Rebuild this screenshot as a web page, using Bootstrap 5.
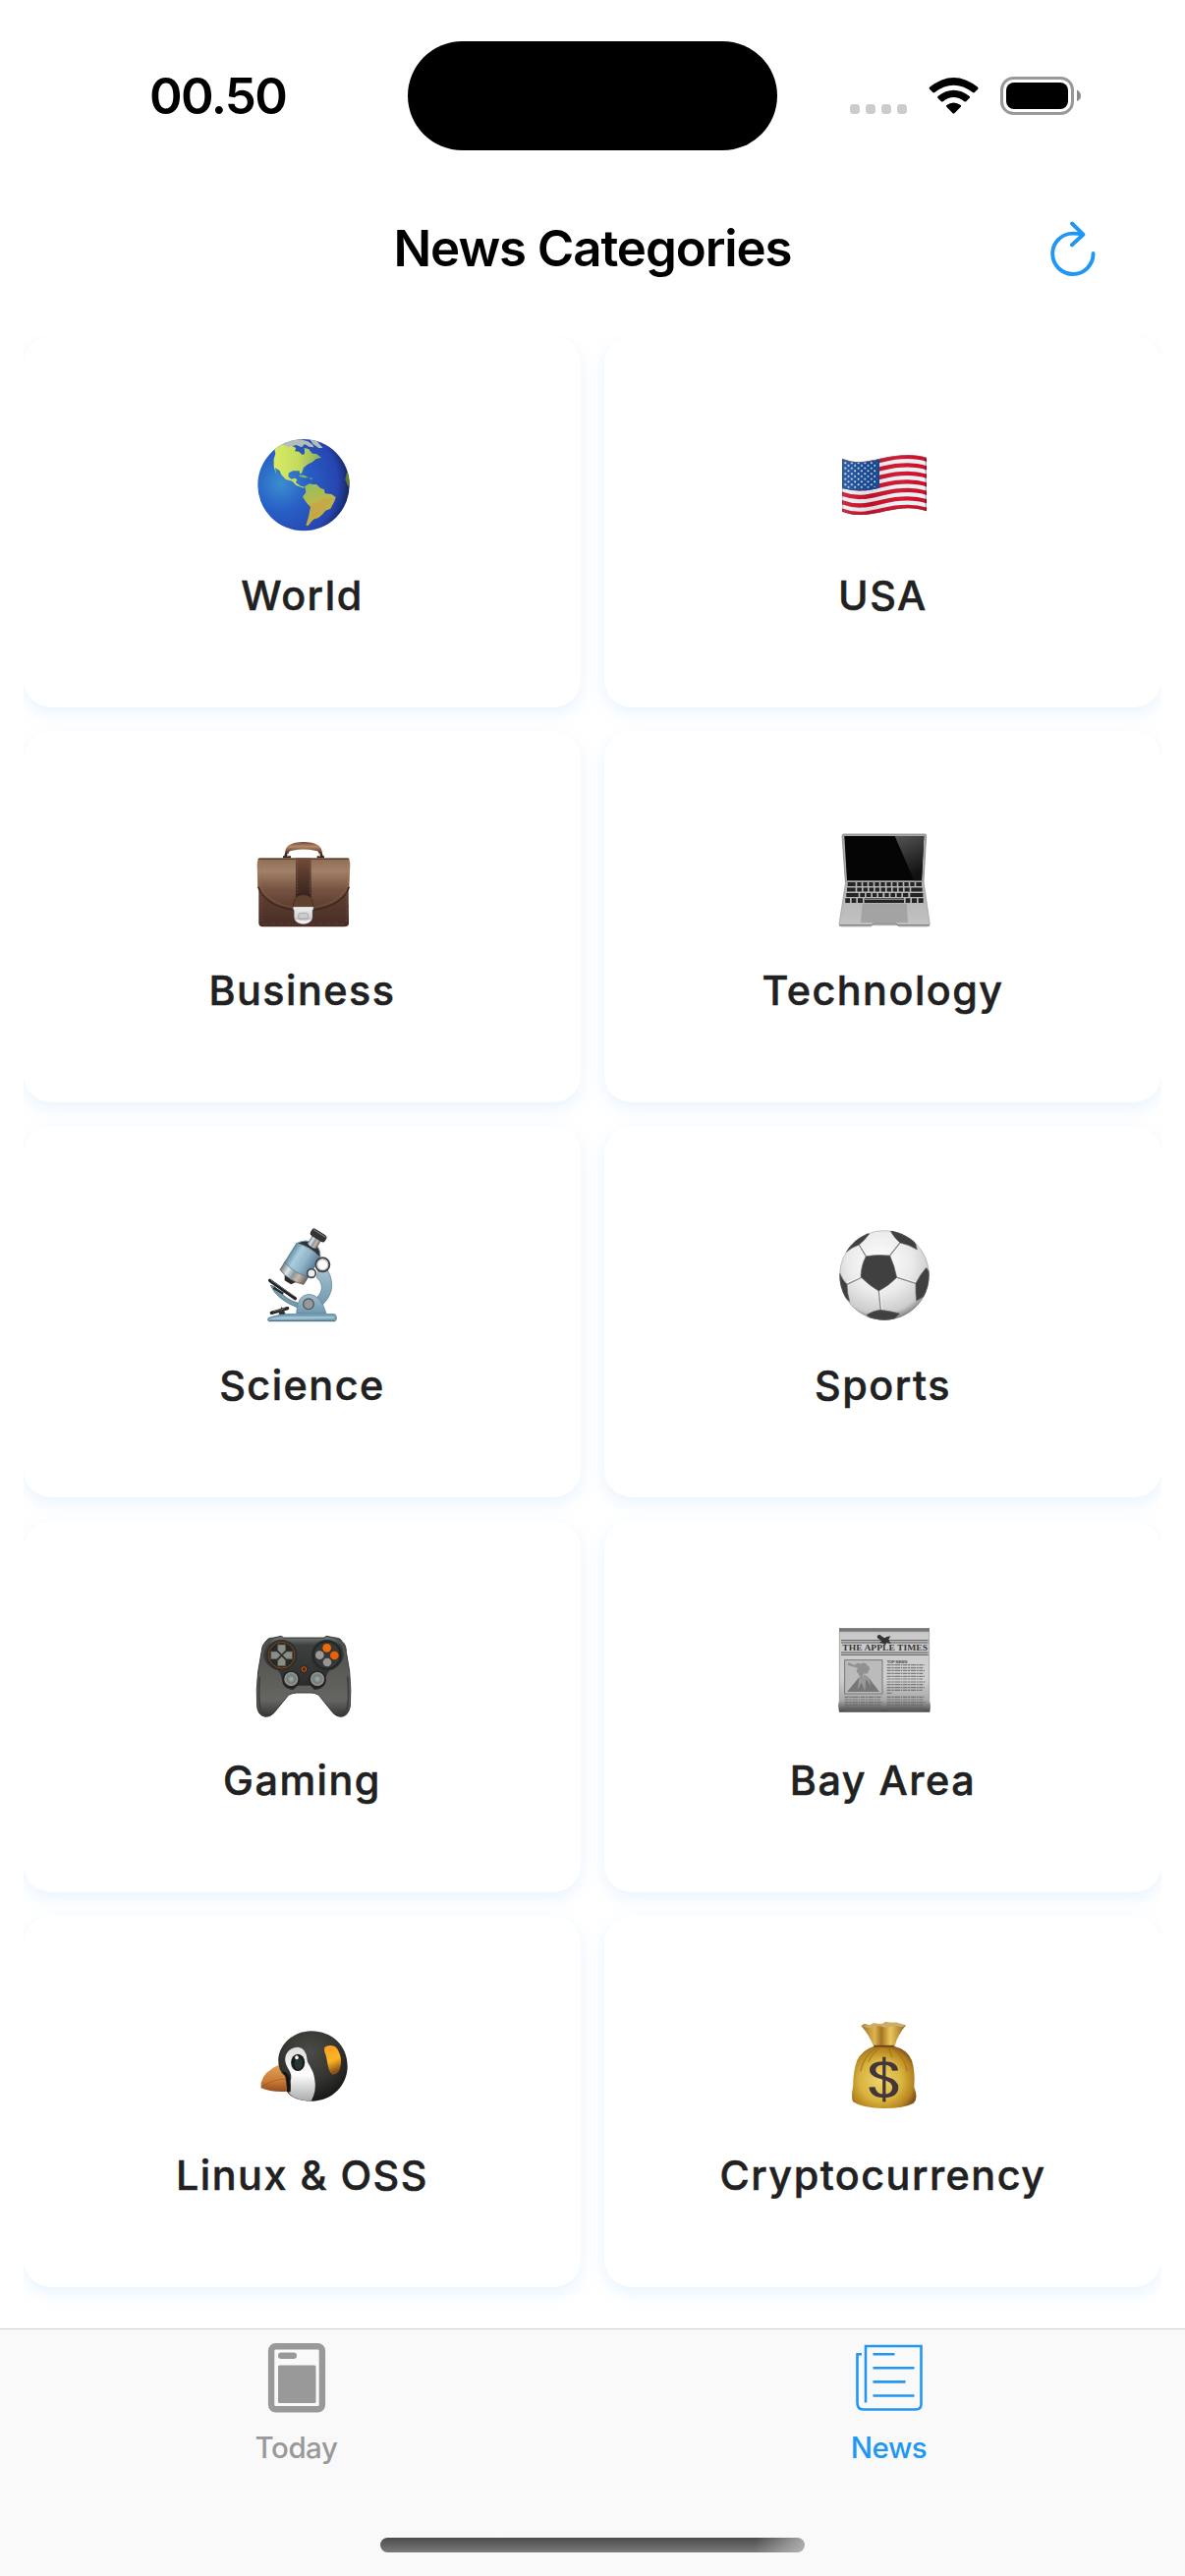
<!DOCTYPE html>
<html lang="en">
<head>
<meta charset="utf-8">
<meta name="viewport" content="width=device-width, initial-scale=1">
<title>News Categories</title>
<link href="https://cdn.jsdelivr.net/npm/bootstrap@5.3.0/dist/css/bootstrap.min.css" rel="stylesheet">
<style>
  body { font-family: Inter, "Liberation Sans", sans-serif; background: #fff; color: #000; }
  .phone { width: 1206px; height: 2622px; }
  svg { display: block; flex: none; }
  .status-bar { height: 177px; padding: 41px 101px 0 152px; }
  .clock { width: 263px; font-size: 51px; font-weight: 600; line-height: 114px; letter-spacing: -1.6px; }
  .island { width: 376px; height: 111px; margin-top: 1px; border-radius: 56px; background: #000; }
  .app-bar { height: 165px; padding: 0 90px; }
  .app-bar .side { width: 48px; }
  .app-title { font-size: 51px; font-weight: 600; letter-spacing: -1.1px; line-height: 62px; margin-top: -14px; }
  .category-grid { height: 2028px; margin: 0 24px; overflow: hidden; display: grid; grid-template-columns: 1fr 1fr; grid-auto-rows: 378px; gap: 24px; }
  .category { border: 0; border-radius: 28px; box-shadow: 0 6px 17px rgba(33,150,243,.1); padding-top: 92px; }
  .category svg { width: 120px; height: 120px; margin-left: 3px; }
  .category-name { margin-top: 28px; font-size: 41.3px; line-height: 48px; font-weight: 500; letter-spacing: 1.5px; color: #212121; white-space: nowrap; -webkit-text-stroke: .5px #212121; }
  .tab-bar { height: 252px; background: #f9f9f9; border-top: 1px solid #cdcdcd; }
  .tab { color: #999; text-decoration: none; padding-top: 9px; font-size: 29.5px; line-height: 36px; font-weight: 500; letter-spacing: -.5px; }
  .tab.active { color: #2196f3; }
  .tab svg { margin-bottom: 9px; }
  .tabs { height: 212px; }
  .home-line { width: 432px; height: 15px; border-radius: 8px; margin: 0 auto; background: linear-gradient(100deg, rgba(249,249,249,0) 88%, rgba(200,200,200,.75) 100%), linear-gradient(#4c4c4c, #7a7a7a); }
</style>
</head>
<body>
<div class="phone d-flex flex-column overflow-hidden">
  <header class="status-bar d-flex align-items-start">
    <div class="clock">00.50</div>
    <div class="island"></div>
    <svg class="ms-auto" width="240" height="112" viewBox="865 41 240 112">
      <g fill="#ccc"><rect x="865" y="106" width="10" height="10" rx="3.5"/><rect x="881" y="106" width="10" height="10" rx="3.5"/><rect x="897" y="106" width="10" height="10" rx="3.5"/><rect x="913" y="106" width="10" height="10" rx="3.5"/></g>
      <path d="M946 88.8Q970.5 69 995.200 88.800Q996 89.800 995.200 90.700L991.800 94Q990.900 94.800 989.900 94Q970.500 79.500 951.300 94Q950.300 94.800 949.400 94L946 90.700Q945.200 89.800 946 88.800ZM954.500 98Q970.500 85.500 986.700 98Q987.600 98.800 986.800 99.700L983.200 103.200Q982.300 104 981.300 103.200Q970.500 95 959.800 103.200Q958.800 104 957.900 103.200L954.400 99.700Q953.600 98.800 954.500 98ZM963.400 107.100Q970.500 101.700 977.800 107.100Q978.600 107.900 977.800 108.800L971.400 115.300Q970.500 116.100 969.600 115.300L963.300 108.800Q962.500 107.900 963.400 107.100Z"/>
      <rect x="1019.500" y="79.500" width="72" height="36" rx="12" fill="none" stroke="#999" stroke-width="3"/>
      <rect x="1024" y="84" width="63" height="27" rx="8"/>
      <path d="M1096 91.500Q1100 93.500 1100 97.500T1096 103Z" fill="#8b8b8b"/>
    </svg>
  </header>

  <div class="app-bar d-flex align-items-center justify-content-between">
    <span class="side"></span>
    <h1 class="app-title mb-0">News Categories</h1>
    <svg width="48" height="72" viewBox="1068 224 48 72" fill="none" stroke="#2196f3" stroke-width="3.900" stroke-linecap="round" stroke-linejoin="round">
      <path d="M1102.200 238.600Q1097 237.600 1092 237.600A20.700 20.700 0 1 0 1112.600 258M1091 227.500L1102.400 238.700L1091 249.300"/>
    </svg>
  </div>

  <main class="category-grid">
    <section class="card category align-items-center">
      <svg viewBox="57 42 360 360">
        <defs>
          <radialGradient id="sea" cx=".25" cy=".48" r=".78"><stop offset="0" stop-color="#3b8ed0"/><stop offset=".38" stop-color="#2860c6"/><stop offset=".8" stop-color="#2745b0"/><stop offset="1" stop-color="#121f50"/></radialGradient>
          <linearGradient id="north" x1="0" x2="1"><stop offset="0" stop-color="#d8ea62"/><stop offset=".5" stop-color="#c5dc5f"/><stop offset="1" stop-color="#8dad5a"/></linearGradient>
          <linearGradient id="south" x1="0" x2=".3" y2="1"><stop offset="0" stop-color="#91c060"/><stop offset=".5" stop-color="#b9b94e"/><stop offset="1" stop-color="#c7a743"/></linearGradient>
          <clipPath id="globe"><circle cx="237" cy="221" r="140"/></clipPath>
        </defs>
        <circle cx="237" cy="221" r="140" fill="url(#sea)"/>
        <g clip-path="url(#globe)">
          <path d="M148 112L170 96L198 100L214 108L210 118L223 119L232 128L240 127L239 108L252 111L264 125L276 126L291 137L274 142L265 150L249 158L237 168L232 184L225 187L224 178L204 178L192 184L190 195L199 203L210 200L217 204L213 214L228 224L241 227L236 230L214 222L202 209L183 204L169 190L164 177L150 169L154 188L146 166L146 142L151 125Z" fill="url(#north)"/>
          <path d="M170 95L195 85L228 82L250 88L265 98L268 106L254 104L240 96L231 106L215 99L190 105ZM256 82L278 88L296 108L283 108L266 96Z" fill="#b5bdb9"/>
          <path d="M213 110L235 104L241 119L229 123Z" fill="#2b55ad"/>
          <path d="M224 190L241 192L252 199L239 199L224 195ZM253 199L265 201L260 204Z" fill="#8bb461"/>
          <path d="M241 225L254 217L265 219L276 219L289 231L300 235L302 247L322 249L335 258L331 271L319 293L304 299L294 311L282 321L267 326L259 335L250 346L244 344L252 318L258 288L247 277L234 257L244 243Z" fill="url(#south)"/>
          <path d="M257 278L281 272L304 260L325 264L307 289L282 311L261 322Z" fill="#cda045" opacity=".6"/>
          <path d="M371 178L377 193L377 230L370 220L364 204L367 190Z" fill="#657b2b"/>
        </g>
      </svg>
      <div class="category-name">World</div>
    </section>

    <section class="card category align-items-center">
      <svg viewBox="60 42 360 360">
        <defs>
          <clipPath id="flag"><path d="M111 140C155 158 190 149 232 139S330 123 369 137V301C330 286 285 291 243 301S158 320 111 302Z"/></clipPath>
          <linearGradient id="sheen"><stop offset="0" stop-color="#222" stop-opacity=".35"/><stop offset=".03" stop-color="#fff" stop-opacity=".1"/><stop offset=".35" stop-color="#000" stop-opacity=".08"/><stop offset=".7" stop-color="#fff" stop-opacity=".05"/><stop offset=".97" stop-color="#000" stop-opacity="0"/><stop offset="1" stop-color="#000" stop-opacity=".4"/></linearGradient>
          <path id="wave" d="M105 144C155 164 190 155 232 145S330 129 375 145"/>
          <pattern id="stars" width="20" height="16.500" patternUnits="userSpaceOnUse" x="116" y="150"><rect x="2" y="1" width="5.500" height="5.500" rx="2" fill="#fff"/><rect x="12" y="9" width="5.500" height="5.500" rx="2" fill="#fff"/></pattern>
        </defs>
        <g clip-path="url(#flag)">
          <rect x="105" y="125" width="270" height="200" fill="#edf3f5"/>
          <g fill="none" stroke="#d0102b" stroke-width="13"><use href="#wave"/><use href="#wave" y="25.500"/><use href="#wave" y="51"/><use href="#wave" y="76.500"/><use href="#wave" y="102"/><use href="#wave" y="127.500"/><use href="#wave" y="153"/></g>
          <path d="M111 140C150 157 187 151 225 141V230Q169 245 111 232Z" fill="#124a98"/>
          <path d="M116 148Q160 158 218 147V226Q168 238 116 229Z" fill="url(#stars)"/>
          <rect x="110" y="125" width="260" height="200" fill="url(#sheen)"/>
          <path d="M111 140C155 158 190 149 232 139S330 123 369 137" fill="none" stroke="#8b8187" stroke-width="5" opacity=".65"/>
          <path d="M111 302C158 320 200 311 243 301S330 286 369 301" fill="none" stroke="#76172a" stroke-width="5" opacity=".6"/>
        </g>
      </svg>
      <div class="category-name">USA</div>
    </section>

    <section class="card category align-items-center">
      <svg viewBox="147 48 360 360">
        <defs>
          <linearGradient id="flap" x2="0" y2="1"><stop offset="0" stop-color="#8e6c54"/><stop offset=".25" stop-color="#a18168"/><stop offset=".6" stop-color="#765240"/><stop offset="1" stop-color="#593a2e"/></linearGradient>
          <linearGradient id="bag" x2="0" y2="1"><stop offset="0" stop-color="#735242"/><stop offset="1" stop-color="#482c24"/></linearGradient>
          <linearGradient id="grip" x2="0" y2="1"><stop offset="0" stop-color="#6d4632"/><stop offset=".4" stop-color="#b8896a"/><stop offset="1" stop-color="#4a2d20"/></linearGradient>
          <linearGradient id="strap" x2="0" y2="1"><stop offset="0" stop-color="#704b38"/><stop offset="1" stop-color="#35221b"/></linearGradient>
          <linearGradient id="steel" x2="0" y2="1"><stop offset="0" stop-color="#eee"/><stop offset=".6" stop-color="#d4d4d6"/><stop offset="1" stop-color="#fff"/></linearGradient>
        </defs>
        <path d="M273 160V151L279 135M381 160V151L375 135" stroke="#3c2a23" stroke-width="9" fill="none"/>
        <path d="M264 157H288M368 157H390" stroke="#2e211d" stroke-width="7"/><path d="M278 145v10M376 145v10" stroke="#d7ad87" stroke-width="4"/>
        <path d="M271 146Q270 129 282 121Q300 111 327 111T371 121Q383 128 383 146L374 145Q373 138 361 137Q327 130 292 137Q281 138 280 146Z" fill="url(#grip)"/>
        <path d="M190 175H463L465 360Q464 370 451 370H202Q190 370 190 358Z" fill="url(#bag)"/>
        <path d="M192 160H462Q468 164 469 180L466 248C450 296 399 320 327 321S202 296 187 248L185 180Q186 164 192 160Z" fill="url(#flap)"/>
        <path d="M188 248C204 294 260 320 327 320S451 295 466 248" fill="none" stroke="#402820" stroke-width="5"/>
        <path d="M194 165V241C212 289 262 312 327 312S443 288 460 241V165" fill="none" stroke="#a98268" stroke-width="1.500" stroke-dasharray="4 4"/>
        <path d="M188 163H466" stroke="#5d4030" stroke-width="4"/>
        <path d="M303 160H350V280H303Z" fill="url(#strap)"/><path d="M307 164V272M346 164V272" stroke="#9b7157" stroke-width="1.500" stroke-dasharray="5 4"/>
        <path d="M296 311V300Q298 272 326 272T356 300V311Z" fill="#60402f" stroke="#3e271e" stroke-width="2"/>
        <path d="M295 309H357V316L354 320V343Q350 361 326 362Q302 361 298 343V320L295 316Z" fill="url(#steel)" stroke="#777" stroke-width="1"/>
        <rect x="311" y="328" width="30" height="20" rx="6" fill="#ccc" stroke="#999" stroke-width="2"/><path d="M300 345H353" stroke="#999" stroke-width="2"/>
        <path d="M199 188V356M457 188V356M204 361H448" fill="none" stroke="#8e6856" stroke-width="1.300" stroke-dasharray="4 4"/>
      </svg>
      <div class="category-name">Business</div>
    </section>

    <section class="card category align-items-center">
      <svg viewBox="240 48 360 360">
        <defs>
          <linearGradient id="glare" x2=".3" y2="1"><stop offset="0" stop-color="#555"/><stop offset="1" stop-color="#111"/></linearGradient>
          <linearGradient id="alu" x2="0" y2="1"><stop offset="0" stop-color="#b0b0b0"/><stop offset="1" stop-color="#c3c3c3"/></linearGradient>
        </defs>
        <path d="M295 87H545Q549 88 548 93L540 232H301L291 93Q291 88 295 87Z" fill="#aaa" stroke="#777" stroke-width="2"/>
        <path d="M298 93H541L534 229H306Z" fill="#050505"/>
        <path d="M452 93H541L534 229H511Z" fill="url(#glare)"/>
        <path d="M302 231H540L559 362Q559 368 552 369H466L458 365H384L379 369H289Q282 369 282 362Z" fill="url(#alu)" stroke="#838383" stroke-width="1.500"/>
        <path d="M283 365H380L387 360H455L462 365H558" fill="none" stroke="#777" stroke-width="3"/>
        <path d="M354 300H487L491 356H349Z" fill="#a3a3a3" stroke="#939393"/>
        <g fill="none" stroke="#242424" stroke-width="11.500">
          <path d="M308 240H332M337 240H350M355 240H368M373 240H386M391 240H404M409 240H422M427 240H440M445 240H458M463 240H476M481 240H494M499 240H512M517 240H534"/>
          <path d="M306 256.500H332M337 256.500H351M356 256.500H369M374 256.500H387M392 256.500H405M410 256.500H423M428 256.500H441M446 256.500H459M464 256.500H477M482 256.500H497M502 256.500H536"/>
          <path d="M304 273H341M346 273H360M365 273H379M384 273H397M402 273H415M421 273H434M439 273H453M458 273H472M477 273H493M499 273H538"/>
          <path stroke-width="14" d="M301 290H315M320 290H334M339 290H354M359 290H480M485 290H499M504 290H519M524 290H539"/>
        </g>
        <path d="M359 286H480" stroke="#999" stroke-width="3"/>
      </svg>
      <div class="category-name">Technology</div>
    </section>

    <section class="card category align-items-center">
      <svg viewBox="117 24 360 360">
        <defs>
          <linearGradient id="tube"><stop offset="0" stop-color="#648da4"/><stop offset=".25" stop-color="#aaccdc"/><stop offset=".6" stop-color="#8fb4c8"/><stop offset="1" stop-color="#587e96"/></linearGradient>
          <linearGradient id="ring"><stop offset="0" stop-color="#707b82"/><stop offset=".25" stop-color="#e0e6e8"/><stop offset=".5" stop-color="#87989f"/><stop offset=".7" stop-color="#d1b7a5"/><stop offset="1" stop-color="#61666b"/></linearGradient>
          <linearGradient id="stand" x2="0" y2="1"><stop offset="0" stop-color="#9fbfd0"/><stop offset="1" stop-color="#6f98ac"/></linearGradient>
        </defs>
        <path d="M341 190L371 190Q388 220 381 252Q372 281 348 300L329 279Q352 261 352 242Q351 221 337 212Z" fill="url(#stand)" stroke="#587685" stroke-width="2"/>
        <path d="M196 235Q214 278 281 304L280 289Q245 281 208 238Z" fill="#779aac" stroke="#446174" stroke-width="2"/>
        <path d="M275 321Q277 264 313 262Q350 263 366 321Z" fill="url(#stand)" stroke="#5c7c8b" stroke-width="2"/>
        <path d="M186 341Q184 332 206 328L233 321H389Q399 323 399 337Q398 345 389 345H191Z" fill="#729bb1"/><path d="M190 340Q200 331 240 329H391V337Z" fill="#a1c3d1"/><path d="M190 344H394" stroke="#496b7c" stroke-width="3"/>
        <circle cx="312" cy="292" r="16" fill="#999" stroke="#505a60" stroke-width="4"/>
        <path d="M194 220L271 275" stroke="#222" stroke-width="10" stroke-linecap="round"/><path d="M196 218L268 268" stroke="#999" stroke-width="2"/>
        <path d="M205 242L235 260" stroke="#252c30" stroke-width="7"/>
        <path d="M199 319L248 305" stroke="#262626" stroke-width="10" stroke-linecap="round"/><path d="M224 323L230 309L238 322" stroke="#333" stroke-width="8"/><path d="M205 315L240 305" stroke="#888" stroke-width="2"/>
        <g transform="translate(297 152) rotate(32) translate(-284.500 -146)">
          <path d="M262 219H304L294 234H271Z" fill="#29292b"/>
          <path d="M242 183H327V214Q285 230 242 214Z" fill="url(#ring)" stroke="#555" stroke-width="2"/>
          <path d="M242 119Q283 99 327 119V187Q284 201 242 187Z" fill="url(#tube)" stroke="#526f81" stroke-width="2"/>
          <path d="M242 119Q257 92 285 91T327 119Q284 104 242 119Z" fill="#2d3338" stroke="#7f9aab" stroke-width="3"/>
          <path d="M270 72H302V101Q286 107 270 101Z" fill="url(#ring)"/>
          <path d="M260 56Q260 51 267 51H304Q312 52 312 58V67Q312 74 304 75H268Q260 74 260 67Z" fill="#333"/><path d="M264 56H308" stroke="#888" stroke-width="3"/>
        </g>
        <circle cx="355" cy="172" r="21" fill="#fff" stroke="#444" stroke-width="6"/><circle cx="355" cy="172" r="16" fill="none" stroke="#bbb" stroke-width="3"/>
        <circle cx="321" cy="198" r="13" fill="#eee" stroke="#40484d" stroke-width="5"/>
      </svg>
      <div class="category-name">Science</div>
    </section>

    <section class="card category align-items-center">
      <svg viewBox="90 24 360 360">
        <defs>
          <radialGradient id="ball" cx=".45" cy=".35" r=".65"><stop offset="0" stop-color="#fff"/><stop offset=".55" stop-color="#eaeaea"/><stop offset=".88" stop-color="#ccc"/><stop offset="1" stop-color="#888"/></radialGradient>
          <clipPath id="sphere"><circle cx="270" cy="204" r="137"/></clipPath>
        </defs>
        <circle cx="270" cy="204" r="137" fill="url(#ball)"/>
        <g clip-path="url(#sphere)">
          <g fill="none" stroke="#888" stroke-width="4"><path d="M214 146L193 111M287 144L318 105M307 210L366 229M253 251L259 310M202 210L156 232"/></g>
          <g fill="none" stroke="#fff" stroke-width="2"><path d="M218 145L197 111M291 144L321 107M307 206L366 225M257 251L263 310M202 206L156 227"/></g>
          <g fill="#404040" stroke="#666" stroke-width="2">
            <path d="M214 146Q250 140 287 144Q301 174 308 211Q283 237 253 252Q225 236 198 209Q199 174 214 146Z"/>
            <path d="M155 133Q169 119 193 111Q211 96 224 78L205 70L150 105Z"/>
            <path d="M289 70Q303 93 318 105Q347 111 370 126L361 90L310 60Z"/>
            <path d="M398 181Q377 205 366 229Q365 258 368 282L406 260L412 200Z"/>
            <path d="M134 198Q143 220 156 232Q156 258 164 284L130 255Z"/>
            <path d="M216 325Q238 311 259 310Q289 314 317 321L292 346L235 346Z"/>
          </g>
        </g>
        <circle cx="270" cy="204" r="136" fill="none" stroke="#777" stroke-width="2" opacity=".5"/>
      </svg>
      <div class="category-name">Sports</div>
    </section>

    <section class="card category align-items-center">
      <svg viewBox="117 30 360 360">
        <defs>
          <linearGradient id="shell" x2="0" y2="1"><stop offset="0" stop-color="#4b504d"/><stop offset=".4" stop-color="#595a56"/><stop offset=".8" stop-color="#656661"/><stop offset="1" stop-color="#333"/></linearGradient>
          <linearGradient id="panel" x2="0" y2="1"><stop offset="0" stop-color="#747b78"/><stop offset=".16" stop-color="#3c403f"/><stop offset="1" stop-color="#292b29"/></linearGradient>
          <radialGradient id="stick"><stop offset="0" stop-color="#a8afad"/><stop offset=".6" stop-color="#727a78"/><stop offset="1" stop-color="#a0a19e"/></radialGradient>
        </defs>
        <path d="M184 119Q190 110 205 111L229 106L236 111H360L366 106L393 111Q410 112 414 122Q427 132 427 154L437 213Q443 273 439 321Q432 352 411 352Q397 352 387 341L343 286Q331 278 318 279H277Q263 279 251 286L206 341Q195 353 180 352Q158 349 155 322Q151 273 158 214L169 151Q168 134 184 119Z" fill="url(#shell)" stroke="#393c39" stroke-width="3"/>
        <path d="M163 230Q158 290 164 325Q170 340 180 341M431 230Q437 290 430 325Q425 340 414 341" fill="none" stroke="#3d3f3c" stroke-width="5"/>
        <path d="M205 114L229 108L236 113H360L366 108L392 114Q421 133 420 167Q413 197 376 211Q364 225 361 253Q351 270 330 270L318 257H278L265 270Q244 269 234 253Q230 225 219 211Q178 197 174 167Q178 131 205 114Z" fill="url(#panel)"/>
        <circle cx="230" cy="164" r="47" fill="#2b2e2c"/><circle cx="230" cy="164" r="40" fill="#252927" stroke="#914318" stroke-width="3"/>
        <circle cx="368" cy="164" r="47" fill="#292c2a"/><circle cx="368" cy="164" r="41" fill="#343836" stroke="#151918" stroke-width="2"/>
        <g fill="#8b8e86" stroke="#4b5049" stroke-width="2"><path d="M218 132H242V149L230 161L218 149ZM218 197H242V180L230 168L218 180ZM197 153H215L227 164L215 176H197ZM263 153H245L233 164L245 176H263Z"/></g>
        <circle cx="368" cy="142" r="13" fill="#f26908"/><circle cx="391" cy="165" r="13" fill="#ef5d05"/><circle cx="346" cy="164" r="13" fill="#9b9897"/><circle cx="369" cy="186" r="13" fill="#989493"/>
        <circle cx="298" cy="207" r="11" fill="#252927"/><circle cx="298" cy="207" r="7" fill="#4f2818" stroke="#df5a12" stroke-width="3"/>
        <circle cx="259" cy="239" r="27" fill="#222524"/><circle cx="259" cy="237" r="21" fill="url(#stick)"/>
        <circle cx="339" cy="239" r="27" fill="#222524"/><circle cx="339" cy="237" r="21" fill="url(#stick)"/>
      </svg>
      <div class="category-name">Gaming</div>
    </section>

    <section class="card category align-items-center">
      <svg viewBox="150 30 360 360">
        <defs>
          <linearGradient id="paper" x2="0" y2="1"><stop offset="0" stop-color="#aaa"/><stop offset=".07" stop-color="#c9c9c9"/><stop offset=".6" stop-color="#d0d0d0"/><stop offset=".86" stop-color="#a8a8a8"/><stop offset="1" stop-color="#484848"/></linearGradient>
        </defs>
        <path d="M192 81H468V300L471 318L469 338H192L189 318L192 300Z" fill="url(#paper)"/>
        <path d="M192 87H468" stroke="#777" stroke-width="11"/>
        <path d="M198 119H464M198 126H464M198 156H464M198 163H464" stroke="#555" stroke-width="3"/>
        <path d="M308 105L315 101L330 112L338 108L349 106L343 117L350 129L337 126L333 133L325 128L315 125L322 121L309 112Z" fill="#343434"/>
        <text x="202" y="150" font-family="Liberation Serif, serif" font-weight="700" font-size="24" fill="#383838" textLength="260" lengthAdjust="spacingAndGlyphs">THE APPLE TIMES</text>
        <rect x="209" y="179" width="115" height="103" fill="#bbb" stroke="#777" stroke-width="3"/>
        <path d="M216 276L253 232L260 237L269 224L281 232L315 276Z" fill="#777"/><path d="M253 233L248 270L260 248L271 273L274 236L290 260L282 232L269 226Z" fill="#999"/>
        <path d="M250 220Q240 213 250 204L218 194L220 187L240 194Q247 185 258 191Q270 182 280 197Q291 203 281 213Q283 223 268 220L259 236Z" fill="#919191"/>
        <text x="338" y="188" font-family="Liberation Sans, sans-serif" font-weight="700" font-size="12" fill="#444" textLength="62">TOP NEWS</text>
        <path d="M338 194H452M338 203H448M338 211H453M338 220H449M338 229H453M338 237H447M338 246H454M338 254H450M338 263H453M338 271H446M338 280H354M338 292H452M338 300H449M338 308H454M338 316H448M338 325H454M338 333H450M209 292H322M209 300H318M209 308H324M209 316H320M209 325H324M209 333H321" stroke="#666" stroke-width="3.500" stroke-dasharray="12 2 7 2 17 2 5 2" opacity=".8"/>
        <path d="M193 92V300M467 92V300" stroke="#999" stroke-width="2"/>
      </svg>
      <div class="category-name">Bay Area</div>
    </section>

    <section class="card category align-items-center">
      <svg viewBox="237 6 360 360">
        <defs>
          <radialGradient id="hood" cx=".45" cy=".3" r=".7"><stop offset="0" stop-color="#4b4b48"/><stop offset=".6" stop-color="#343431"/><stop offset="1" stop-color="#171715"/></radialGradient>
          <linearGradient id="beak" x2="0" y2="1"><stop offset="0" stop-color="#e0a057"/><stop offset=".6" stop-color="#cb7c37"/><stop offset="1" stop-color="#914d20"/></linearGradient>
          <linearGradient id="cheek" x2="0" y2="1"><stop offset="0" stop-color="#ddd"/><stop offset=".5" stop-color="#fff"/><stop offset="1" stop-color="#aaa"/></linearGradient>
          <linearGradient id="patch" x2=".25" y2="1"><stop offset="0" stop-color="#fa9d24"/><stop offset=".6" stop-color="#fdb524"/><stop offset="1" stop-color="#8d5118"/></linearGradient>
        </defs>
        <g transform="scale(1.760 1)">
          <path d="M193 186Q168 205 163 240V256Q181 270 210 266L215 214Z" fill="url(#beak)"/>
          <path d="M164 254Q181 228 210 228" fill="none" stroke="#985724" stroke-width="2"/>
          <path d="M250 82C220 83 196 119 193 167Q192 203 205 220L209 269Q220 295 251 296C287 296 313 247 313 190C313 126 286 82 250 82Z" fill="url(#hood)"/>
          <path d="M227 131C209 133 202 158 206 181C210 202 217 209 215 228L209 265Q219 295 250 296Q260 264 256 228C254 197 242 180 243 168Q241 133 227 131Z" fill="url(#cheek)"/>
          <path d="M202 208Q214 220 211 268" fill="none" stroke="#151515" stroke-width="6"/>
          <ellipse cx="227" cy="178" rx="12" ry="26" fill="#151c19"/><ellipse cx="228" cy="181" rx="7" ry="19" fill="#263530"/><ellipse cx="225" cy="163" rx="3" ry="6" fill="#fff"/>
          <path d="M273 132Q281 121 292 130C302 147 305 180 298 205Q291 219 285 213C277 195 279 165 273 145Z" fill="url(#patch)"/>
        </g>
      </svg>
      <div class="category-name">Linux &amp; OSS</div>
    </section>

    <section class="card category align-items-center">
      <svg viewBox="2010 6 360 360">
        <defs>
          <radialGradient id="sack" cx=".45" cy=".55" r=".6"><stop offset="0" stop-color="#efd46d"/><stop offset=".55" stop-color="#d9b43e"/><stop offset=".85" stop-color="#b4821f"/><stop offset="1" stop-color="#7d521b"/></radialGradient>
          <linearGradient id="ruffle"><stop offset="0" stop-color="#9e6922"/><stop offset=".3" stop-color="#ddb450"/><stop offset=".45" stop-color="#a47422"/><stop offset=".65" stop-color="#edc65c"/><stop offset="1" stop-color="#916020"/></linearGradient>
        </defs>
        <g transform="scale(1.760 1)">
          <path d="M1204 66L1210 60L1219 64L1226 57L1240 62L1246 54L1267 56L1272 62L1282 64Q1267 95 1262 130H1226Q1218 93 1204 66Z" fill="url(#ruffle)"/>
          <path d="M1204 66L1219 64L1232 60L1266 56L1282 64L1275 70L1264 65L1248 72L1232 65L1218 73Z" fill="#c9ae6c"/>
          <path d="M1227 128H1261Q1285 138 1292 172Q1298 205 1296 253Q1304 288 1295 302Q1279 318 1243 318T1190 298Q1186 284 1190 251Q1190 204 1197 172Q1205 140 1227 128Z" fill="url(#sack)"/>
          <path d="M1229 134Q1208 160 1203 205M1235 135Q1221 155 1217 177M1258 135Q1280 161 1284 205M1252 135L1258 163" fill="none" stroke="#9b701d" stroke-width="2.500" opacity=".65"/>
          <path d="M1226 128H1261" stroke="#66411b" stroke-width="5"/>
          <path d="M1263 203Q1262 180 1244 180Q1224 180 1224 201C1224 217 1236 221 1246 226C1256 231 1264 239 1263.500 256Q1262 280 1244 280Q1225 280 1223 253" fill="none" stroke="#43363b" stroke-width="10.500"/>
          <path d="M1244 161V298" stroke="#43363b" stroke-width="5.500"/>
        </g>
      </svg>
      <div class="category-name">Cryptocurrency</div>
    </section>
  </main>

  <nav class="tab-bar">
    <div class="tabs d-flex">
      <a href="#" class="tab col-6 d-flex flex-column align-items-center">
        <svg width="72" height="84" viewBox="265.500 2380 72 84" fill="#999">
          <rect x="275.600" y="2388.200" width="51.800" height="64" rx="4.500" fill="none" stroke="#999" stroke-width="6.400"/>
          <rect x="282.500" y="2394.500" width="19" height="6.500" rx="3.200"/><rect x="282.500" y="2407.500" width="38.500" height="38.500" rx="1.500"/>
        </svg>
        <span>Today</span>
      </a>
      <a href="#" class="tab active col-6 d-flex flex-column align-items-center">
        <svg width="72" height="84" viewBox="868.500 2380 72 84" fill="none" stroke="#2196f3" stroke-width="2.600">
          <path d="M880.500 2445.500V2388H937V2447Q937 2452.500 931.500 2452.500H878Q872 2452.500 872 2446V2396.300H876.500M888 2396.300H910M888 2410.300H930M888 2424.400H921M888 2438.500H930"/>
        </svg>
        <span>News</span>
      </a>
    </div>
    <div class="home-line"></div>
  </nav>
</div>
<script src="https://cdn.jsdelivr.net/npm/bootstrap@5.3.0/dist/js/bootstrap.bundle.min.js"></script>
</body>
</html>
